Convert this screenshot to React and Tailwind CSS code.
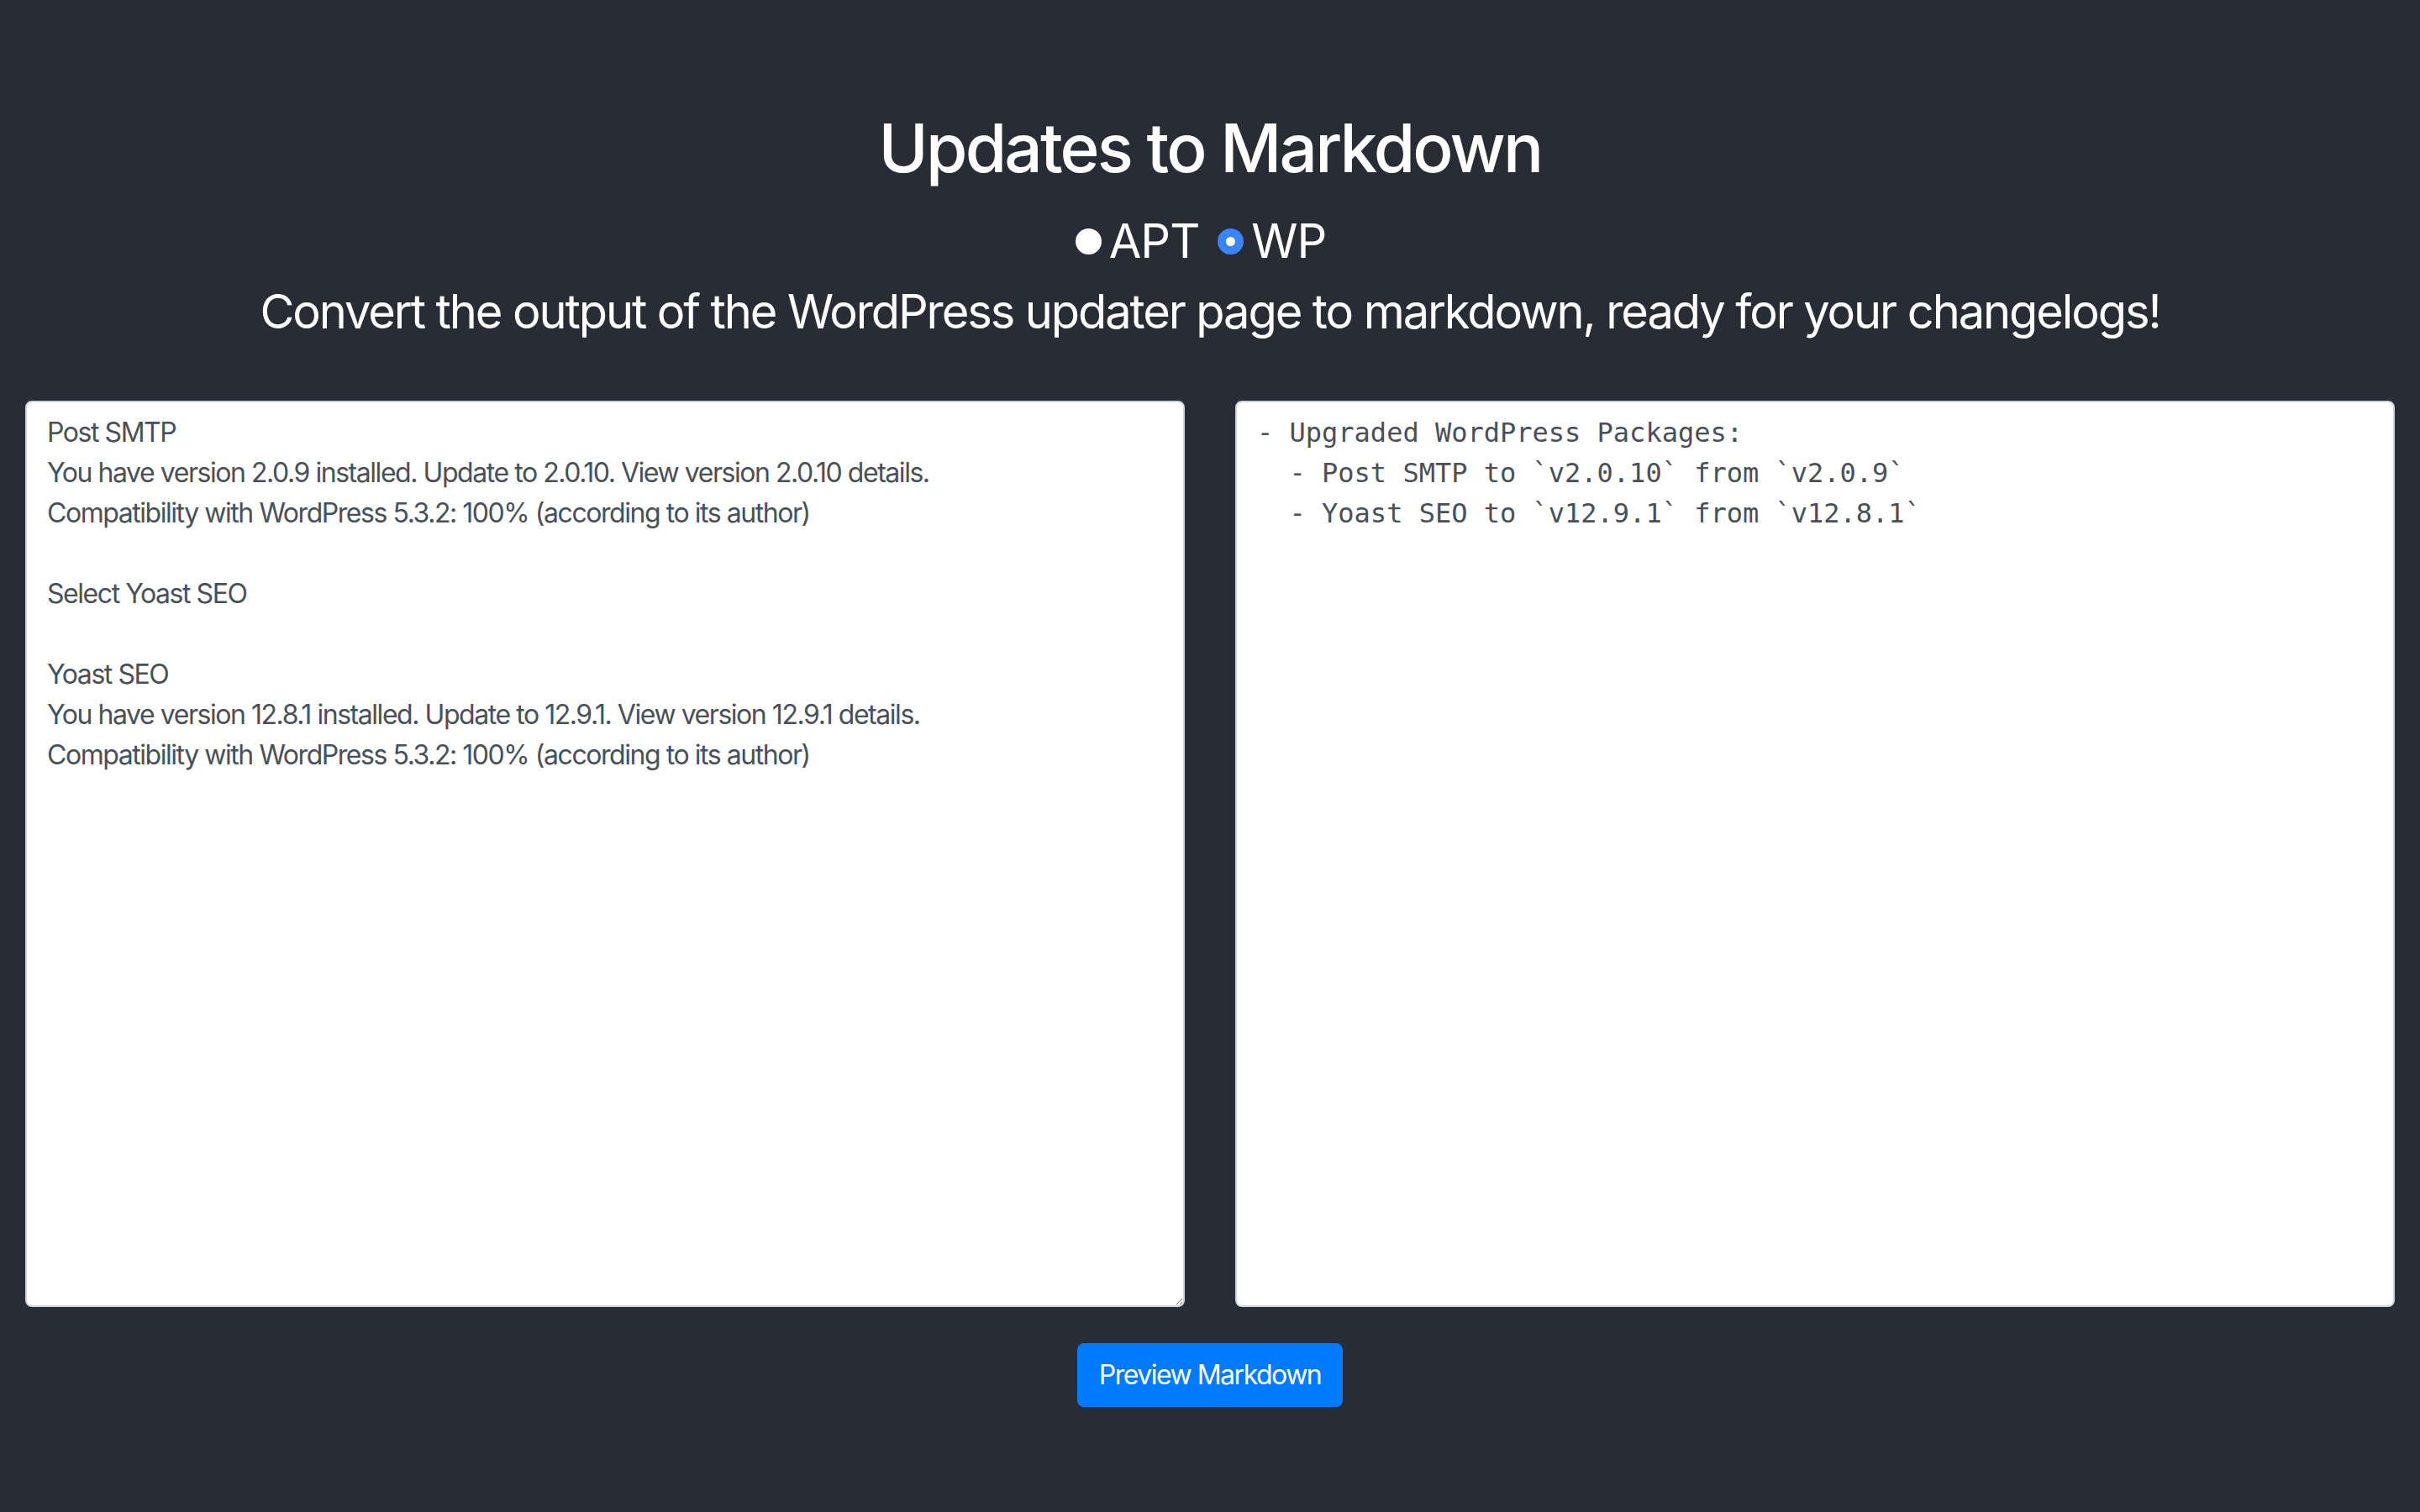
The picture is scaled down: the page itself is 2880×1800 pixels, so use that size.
import { useState } from 'react'

const INPUT = `Post SMTP
You have version 2.0.9 installed. Update to 2.0.10. View version 2.0.10 details.
Compatibility with WordPress 5.3.2: 100% (according to its author)

Select Yoast SEO

Yoast SEO
You have version 12.8.1 installed. Update to 12.9.1. View version 12.9.1 details.
Compatibility with WordPress 5.3.2: 100% (according to its author)`

const OUTPUT = `- Upgraded WordPress Packages:
  - Post SMTP to \`v2.0.10\` from \`v2.0.9\`
  - Yoast SEO to \`v12.9.1\` from \`v12.8.1\``

export default function App() {
  const [mode, setMode] = useState('wp')

  return (
    <div className="min-h-screen bg-[#282c34] font-['Inter',sans-serif] text-white">
      <div className="px-[30px] pt-[128px] pb-[60px]">
        <h1 className="text-center text-[80px] font-medium leading-[96px] tracking-[-2.8px]">Updates to Markdown</h1>

        <div className="mt-[30px] flex items-center justify-center text-[56px] leading-[67px] tracking-[-1px]">
          <Radio label="APT" checked={mode === 'apt'} onClick={() => setMode('apt')} />
          <Radio label="WP" checked={mode === 'wp'} onClick={() => setMode('wp')} last />
        </div>

        <p className="mt-[17px] text-center text-[56px] leading-[67px] tracking-[-2.1px]">
          Convert the output of the WordPress updater page to markdown, ready for your changelogs!
        </p>

        <div className="mt-[72px] grid grid-cols-2 gap-[60px]">
          <textarea
            defaultValue={INPUT}
            spellCheck={false}
            className="h-[1079px] w-full rounded-[8px] border-2 border-[#ced4da] bg-white px-[24px] py-[12px] text-[32px] leading-[48px] tracking-[-1.45px] text-[#495057] outline-none"
          />
          <textarea
            readOnly
            value={OUTPUT}
            spellCheck={false}
            className="h-[1079px] w-full resize-none rounded-[8px] border-2 border-[#ced4da] bg-white px-[24px] py-[12px] font-['DejaVu_Sans_Mono',monospace] text-[32px] leading-[48px] text-[#495057] outline-none"
          />
        </div>

        <div className="mt-[43px] flex justify-center">
          <button className="h-[76px] rounded-[8px] border-2 border-[#007bff] bg-[#007bff] px-[24px] text-[32px] leading-[48px] tracking-[-1.5px] text-white">
            Preview Markdown
          </button>
        </div>
      </div>
    </div>
  )
}

function Radio({ label, checked, onClick, last }) {
  return (
    <label className={last ? 'ml-[22px] mr-[22px] flex cursor-pointer items-center' : 'flex cursor-pointer items-center'} onClick={onClick}>
      <span
        className={
          checked
            ? 'mr-[9px] grid h-[31px] w-[31px] place-items-center rounded-full bg-[#3b84f5]'
            : 'mr-[9px] grid h-[31px] w-[31px] place-items-center rounded-full bg-white'
        }
      >
        {checked && <span className="h-[11px] w-[11px] rounded-full bg-white" />}
      </span>
      <span>{label}</span>
    </label>
  )
}
